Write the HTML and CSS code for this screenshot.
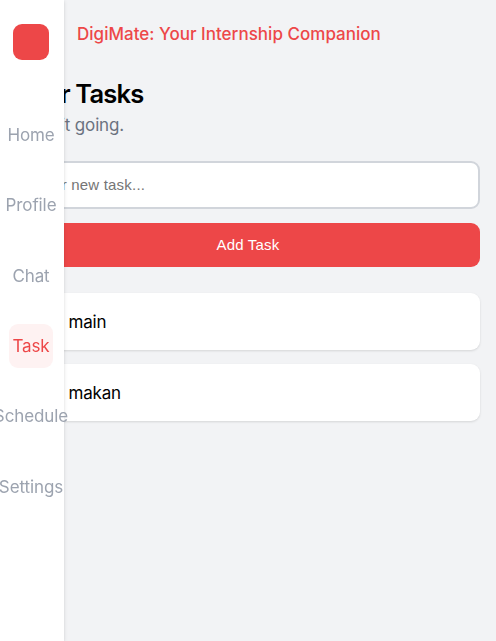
FILE: index.html
```html
<!DOCTYPE html>
<html lang="en">
<head>
<meta charset="utf-8">
<meta name="viewport" content="width=device-width, initial-scale=1">
<title>DigiMate</title>
<link rel="stylesheet" href="styles.css">
</head>
<body>
<nav class="sidebar">
  <div class="logo"></div>
  <div class="links">
    <a class="link">Home</a>
    <a class="link">Profile</a>
    <a class="link">Chat</a>
    <a class="link active">Task</a>
    <a class="link">Schedule</a>
    <a class="link">Settings</a>
  </div>
</nav>
<div class="page">
  <header class="brand">DigiMate: Your Internship Companion</header>
  <main>
    <h1 class="title">Your Tasks</h1>
    <p class="subtitle">Keep it going.</p>
    <input class="field" type="text" placeholder="Enter new task...">
    <button class="add">Add Task</button>
    <ul class="tasks">
      <li class="task"><span class="check"></span>main</li>
      <li class="task"><span class="check"></span>makan</li>
    </ul>
  </main>
</div>
</body>
</html>
```
FILE: styles.css
```css
* { box-sizing: border-box; margin: 0; padding: 0; }
body {
  min-height: 641px;
  background: #f2f3f5;
  color: #000;
  font-family: Inter, "Liberation Sans", sans-serif;
  font-size: 17px;
  overflow: hidden;
}
.sidebar {
  position: fixed;
  top: 0;
  bottom: 0;
  left: 0;
  z-index: 2;
  width: 64px;
  padding: 24px 2px 0 0;
  background: #fff;
  box-shadow: 0 1px 4px rgba(0, 0, 0, 0.12), 0 1px 2px rgba(0, 0, 0, 0.06);
  display: flex;
  flex-direction: column;
  align-items: center;
}
.logo { width: 36px; height: 36px; border-radius: 9px; background: #ed4748; }
.links { margin-top: 53px; display: flex; flex-direction: column; gap: 26.34px; }
.link {
  width: 44px;
  height: 44px;
  border-radius: 9px;
  color: #9ca3af;
  display: flex;
  align-items: center;
  justify-content: center;
  letter-spacing: -0.1px;
  white-space: nowrap;
}
.active { background: #fef2f2; color: #ed4748; }
.page { padding: 0 16px; }
.brand {
  padding: 22px 0 0 61px;
  line-height: 24px;
  font-weight: 500;
  letter-spacing: 0.02px;
  color: #ed4748;
}
.title { margin-top: 32px; font-size: 25.5px; line-height: 32px; font-weight: 600; letter-spacing: -0.8px; }
.subtitle { margin-top: 3px; line-height: 24px; color: #6b7280; letter-spacing: -0.17px; }
.field {
  display: block;
  width: 100%;
  height: 48px;
  margin-top: 24px;
  padding: 0 12px 2px;
  border: 2px solid #d1d5db;
  border-radius: 9px;
  background: #fff;
  font: 15px "Liberation Sans", sans-serif;
  letter-spacing: 0.2px;
}
.field::placeholder { color: #757575; }
.add {
  display: block;
  width: 100%;
  height: 44px;
  margin-top: 14px;
  padding-bottom: 2px;
  border: 0;
  border-radius: 9px;
  background: #ed4748;
  color: #fff;
  font: 15px "Liberation Sans", sans-serif;
  letter-spacing: 0.2px;
}
.tasks { margin-top: 26px; list-style: none; display: flex; flex-direction: column; gap: 14px; }
.task {
  height: 57px;
  padding: 0 18px;
  border-radius: 9px;
  background: #fff;
  box-shadow: 0 1px 3px rgba(0, 0, 0, 0.08), 0 1px 2px rgba(0, 0, 0, 0.05);
  display: flex;
  align-items: center;
  letter-spacing: -0.2px;
}
.check { width: 18px; height: 18px; margin-right: 16.5px; }
```
